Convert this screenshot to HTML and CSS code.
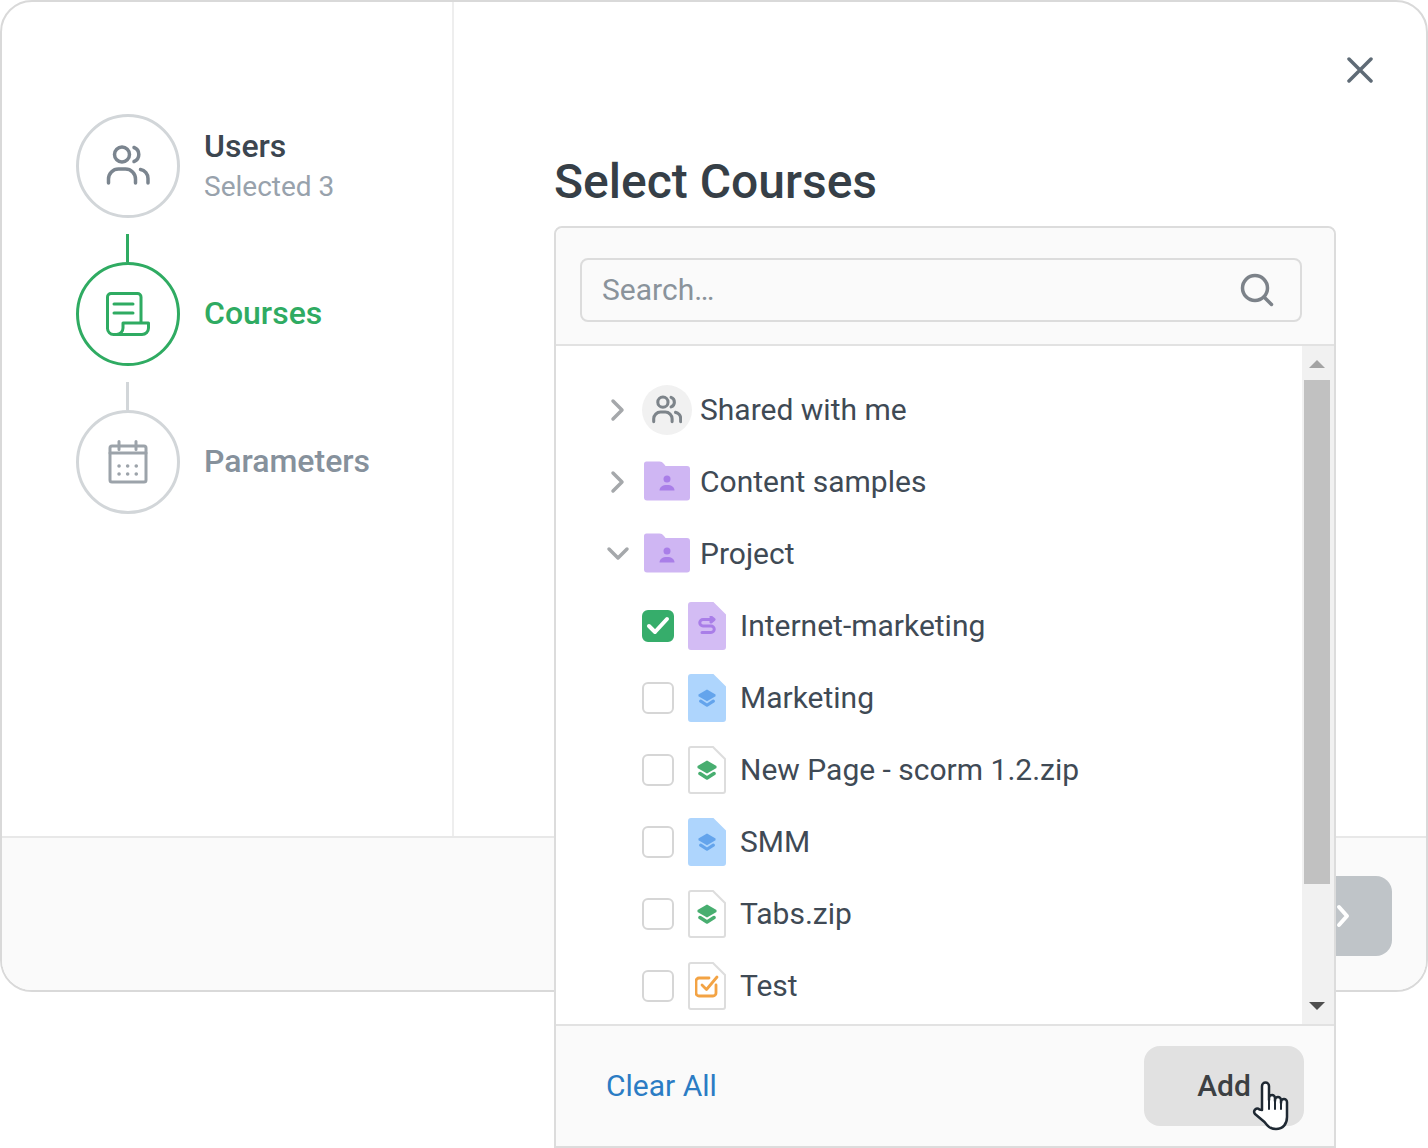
FILE: index.html
```html
<!DOCTYPE html>
<html lang="en">
<head>
    <meta charset="UTF-8">
    <title>Select Courses</title>
    <link rel="stylesheet" href="styles.css">
</head>
<body>
    <svg class="defs" width="0" height="0">
        <symbol id="users" viewBox="0 0 44 44">
            <circle cx="16" cy="10.500" r="7.500"/>
            <path d="M28 3.500a7.500 7.500 0 0 1 0 14"/>
            <path d="M2.500 39v-4a10 10 0 0 1 10-10h7a10 10 0 0 1 10 10v4"/>
            <path d="M34.500 25.500a9 9 0 0 1 7.500 9v4.500"/>
        </symbol>
        <symbol id="folder" viewBox="0 0 48 40">
            <path class="folder-back" d="M1 3a2.500 2.500 0 0 1 2.500-2.500h13c2 0 3 .8 4.500 2.500l1.500 2h21.500a3 3 0 0 1 3 3v28.500a3 3 0 0 1-3 3H4a3 3 0 0 1-3-3z"/>
            <circle class="folder-person" cx="24" cy="18" r="3.500"/>
            <path class="folder-person" d="M16.500 29.500c0-3.500 3-5.500 7.500-5.500s7.500 2 7.500 5.500z"/>
        </symbol>
        <symbol id="page" viewBox="0 0 38 48">
            <path d="M3 1h22l12 12v32a2 2 0 0 1-2 2H3a2 2 0 0 1-2-2V3a2 2 0 0 1 2-2z"/>
        </symbol>
        <symbol id="layers" viewBox="0 0 20 20">
            <path fill="currentColor" d="M10 .5l9.500 5.500v2L10 13.500.5 8V6z"/>
            <path fill="none" stroke="currentColor" stroke-width="3.500" stroke-linecap="round" stroke-linejoin="round" d="M3 13.500l7 4.500 7-4.500"/>
        </symbol>
    </svg>

    <div class="modal">
        <div class="modal-main">
            <aside class="steps">
                <div class="step">
                    <div class="step-circle">
                        <svg class="icon-users" width="44" height="44"><use href="#users"/></svg>
                    </div>
                    <div class="step-text">
                        <div class="step-name">Users</div>
                        <div class="step-sub">Selected 3</div>
                    </div>
                </div>
                <div class="step-line active"></div>
                <div class="step active">
                    <div class="step-circle">
                        <svg width="44" height="44" viewBox="0 0 44 44" fill="none" stroke="#2fab62" stroke-width="3" stroke-linejoin="round" stroke-linecap="round">
                            <path d="M35 31V5a3.500 3.500 0 0 0-3.500-3.500H5A3.500 3.500 0 0 0 1.500 5v31.500a6 6 0 0 0 6 6H36a6.500 6.500 0 0 0 6.500-6.500v-5H17v5a6.500 6.500 0 0 1-6.500 6.500"/>
                            <path d="M8 12h19M8 21h19"/>
                        </svg>
                    </div>
                    <div class="step-text">
                        <div class="step-name">Courses</div>
                    </div>
                </div>
                <div class="step-line"></div>
                <div class="step muted">
                    <div class="step-circle">
                        <svg width="44" height="44" viewBox="0 0 44 44" fill="none" stroke="#9ca3aa" stroke-width="3" stroke-linecap="round">
                            <rect x="4" y="6" width="36" height="36" rx="2"/>
                            <path d="M13 1.500v8M30 1.500v8M4 13h36"/>
                            <path stroke-width="3.500" stroke-dasharray="0.100 8.500" d="M13 26h18M13 34h18"/>
                        </svg>
                    </div>
                    <div class="step-text">
                        <div class="step-name">Parameters</div>
                    </div>
                </div>
            </aside>
            <section class="content">
                <button class="close" aria-label="Close">
                    <svg width="26" height="26" viewBox="0 0 26 26" stroke="#5f6b76" stroke-width="3.500" stroke-linecap="round"><path d="M2 2l22 22M24 2L2 24"/></svg>
                </button>
                <h1>Select Courses</h1>
            </section>
        </div>
        <div class="modal-footer">
            <button class="next">
                <svg width="14" height="24" viewBox="0 0 14 24" fill="none" stroke="#fff" stroke-width="4" stroke-linecap="round" stroke-linejoin="round"><path d="M3 3l8 9-8 9"/></svg>
            </button>
        </div>
    </div>

    <div class="picker">
        <div class="picker-head">
            <div class="search">
                <span class="search-text">Search…</span>
                <svg width="34" height="34" viewBox="0 0 34 34" fill="none" stroke="#7c8289" stroke-width="3.500" stroke-linecap="round"><circle cx="15" cy="15" r="12.500"/><path d="M24.500 24.500l7 7"/></svg>
            </div>
        </div>
        <div class="picker-body">
            <ul class="tree">
                <li class="row">
                    <svg class="chev" width="18" height="24" viewBox="0 0 18 24"><path d="M4 3l9 9-9 9"/></svg>
                    <span class="shared"><svg class="icon-users small" width="30" height="30"><use href="#users"/></svg></span>
                    <span class="label">Shared with me</span>
                </li>
                <li class="row">
                    <svg class="chev" width="18" height="24" viewBox="0 0 18 24"><path d="M4 3l9 9-9 9"/></svg>
                    <svg class="folder" width="48" height="40"><use href="#folder"/></svg>
                    <span class="label">Content samples</span>
                </li>
                <li class="row">
                    <svg class="chev" width="18" height="24" viewBox="0 0 18 24"><path d="M0 7l9 9 9-9"/></svg>
                    <svg class="folder" width="48" height="40"><use href="#folder"/></svg>
                    <span class="label">Project</span>
                </li>
                <li class="row child">
                    <span class="check checked">
                        <svg width="24" height="20" viewBox="0 0 24 20" fill="none" stroke="#fff" stroke-width="4" stroke-linecap="round" stroke-linejoin="round"><path d="M3 10l6 6L21 3"/></svg>
                    </span>
                    <span class="file">
                        <svg class="page purple" width="38" height="48"><use href="#page"/></svg>
                        <svg class="glyph" width="20" height="20" viewBox="0 0 20 20" fill="none" stroke="#a97ee8" stroke-width="3" stroke-linecap="round" stroke-linejoin="round">
                            <path d="M15 3.500H6a3 3 0 0 0 0 6.500h8a3 3 0 0 1 0 6.500H5"/>
                            <path d="M14 1l3 2.500-3 2.500"/>
                        </svg>
                    </span>
                    <span class="label">Internet-marketing</span>
                </li>
                <li class="row child">
                    <span class="check"></span>
                    <span class="file">
                        <svg class="page blue" width="38" height="48"><use href="#page"/></svg>
                        <svg class="glyph layers-blue" width="18" height="18"><use href="#layers"/></svg>
                    </span>
                    <span class="label">Marketing</span>
                </li>
                <li class="row child">
                    <span class="check"></span>
                    <span class="file">
                        <svg class="page plain" width="38" height="48"><use href="#page"/></svg>
                        <svg class="glyph layers-green" width="20" height="20"><use href="#layers"/></svg>
                    </span>
                    <span class="label">New Page - scorm 1.2.zip</span>
                </li>
                <li class="row child">
                    <span class="check"></span>
                    <span class="file">
                        <svg class="page blue" width="38" height="48"><use href="#page"/></svg>
                        <svg class="glyph layers-blue" width="18" height="18"><use href="#layers"/></svg>
                    </span>
                    <span class="label">SMM</span>
                </li>
                <li class="row child">
                    <span class="check"></span>
                    <span class="file">
                        <svg class="page plain" width="38" height="48"><use href="#page"/></svg>
                        <svg class="glyph layers-green" width="20" height="20"><use href="#layers"/></svg>
                    </span>
                    <span class="label">Tabs.zip</span>
                </li>
                <li class="row child">
                    <span class="check"></span>
                    <span class="file">
                        <svg class="page plain" width="38" height="48"><use href="#page"/></svg>
                        <svg class="glyph" width="24" height="24" viewBox="0 0 24 24" fill="none" stroke="#f3a344" stroke-width="2.800" stroke-linecap="round" stroke-linejoin="round">
                            <path d="M21 11v8a3 3 0 0 1-3 3H4a3 3 0 0 1-3-3V7a3 3 0 0 1 3-3h10"/>
                            <path d="M7 11l4.500 4.500L22 3"/>
                        </svg>
                    </span>
                    <span class="label">Test</span>
                </li>
            </ul>
            <div class="scrollbar">
                <span class="arrow up"></span>
                <div class="thumb-track"><div class="thumb"></div></div>
                <span class="arrow down"></span>
            </div>
        </div>
        <div class="picker-foot">
            <a class="clear" href="#">Clear All</a>
            <button class="add">Add</button>
        </div>
    </div>

    <svg class="cursor" width="38" height="50" viewBox="0 0 38 50" fill="#fff" stroke="#1f2933" stroke-width="2.500" stroke-linejoin="round" stroke-linecap="round">
        <path d="M10 29V5a3.500 3.500 0 0 1 7 0v14-2a3 3 0 0 1 6 0v3-1a3 3 0 0 1 6 0v3-1a3 3 0 0 1 6 0v15c0 7-4 12-11 12-6 0-8.500-3-11.500-7L3 33c-2.500-3.500 1.500-7 4.500-4.500z"/>
        <path d="M17 19v9M23 20v8M29 22v6" fill="none" stroke-width="2"/>
    </svg>
</body>
</html>
```

FILE: styles.css
```css
* {
    box-sizing: border-box;
}
html, body {
    margin: 0;
    padding: 0;
    height: 1148px;
    overflow: hidden;
    background-color: #fff;
}
body {
    position: relative;
    font-family: Roboto, "Liberation Sans", sans-serif;
    color: #3c4650;
}
button {
    font-family: inherit;
    border: none;
    cursor: pointer;
}
.defs {
    position: absolute;
}

/* modal behind the picker */
.modal {
    width: 1428px;
    height: 992px;
    border: 2px solid #d9d9d9;
    border-radius: 32px;
    overflow: hidden;
    display: flex;
    flex-direction: column;
}
.modal-main {
    height: 834px;
    display: flex;
}
.modal-footer {
    flex: 1;
    background-color: #fafafa;
    border-top: 2px solid #e8e8e8;
    display: flex;
    justify-content: flex-end;
    align-items: flex-start;
    padding: 38px 34px 0 0;
}
.next {
    width: 120px;
    height: 80px;
    background-color: #bfc4c8;
    border-radius: 16px;
    display: flex;
    align-items: center;
    padding-left: 64px;
}

/* steps */
.steps {
    width: 452px;
    border-right: 2px solid #eeeeee;
    padding: 112px 0 0 74px;
}
.step {
    display: flex;
    align-items: center;
    height: 104px;
}
.step-circle {
    width: 104px;
    height: 104px;
    border: 3px solid #d2d6d9;
    border-radius: 50%;
    display: flex;
    align-items: center;
    justify-content: center;
}
.step.active .step-circle {
    border-color: #2fab62;
}
.step-text {
    margin-left: 24px;
    padding-top: 1px;
}
.step.active .step-text,
.step.muted .step-text {
    padding-bottom: 4px;
}
.step-name {
    font-size: 32px;
    line-height: 40px;
    font-weight: 500;
}
.step-sub {
    font-size: 28px;
    line-height: 40px;
    margin-top: 1px;
    color: #98a2ac;
}
.step.active .step-name {
    color: #2fab62;
}
.step.muted .step-name {
    color: #86919c;
}
.step-line {
    width: 3px;
    height: 28px;
    margin: 16px 0 0 50px;
    background-color: #d2d6d9;
}
.step-line.active {
    background-color: #2fab62;
}
.icon-users {
    fill: none;
    stroke: #7b858f;
    stroke-width: 3.500;
    stroke-linecap: round;
}
.icon-users.small {
    stroke: #7d848a;
    stroke-width: 4.500;
}

/* right side */
.content {
    flex: 1;
    padding: 55px 0 0 100px;
    display: flex;
    flex-direction: column;
}
.close {
    align-self: flex-end;
    width: 26px;
    height: 26px;
    padding: 0;
    margin-right: 53px;
    background: none;
    display: flex;
}
h1 {
    margin: 72px 0 0;
    font-size: 48px;
    line-height: 54px;
    font-weight: 500;
    color: #363f47;
}

/* course picker */
.picker {
    position: absolute;
    left: 554px;
    top: 226px;
    width: 782px;
    height: 922px;
    border: 2px solid #dcdcdc;
    border-radius: 8px 8px 0 0;
    background-color: #fff;
    display: flex;
    flex-direction: column;
}
.picker-head {
    height: 118px;
    padding: 30px 32px 0 24px;
    background-color: #fafafa;
    border-bottom: 2px solid #e2e2e2;
    border-radius: 8px 8px 0 0;
}
.search {
    height: 64px;
    border: 2px solid #dcdcdc;
    border-radius: 8px;
    padding: 0 26px 0 20px;
    display: flex;
    align-items: center;
    justify-content: space-between;
}
.search-text {
    font-size: 30px;
    padding-bottom: 2px;
    color: #8a939b;
}
.picker-body {
    height: 678px;
    display: flex;
    overflow: hidden;
}
.tree {
    flex: 1;
    list-style: none;
    margin: 0;
    padding: 28px 0 0 50px;
}
.row {
    height: 72px;
    display: flex;
    align-items: center;
    font-size: 30px;
    color: #3f4a55;
}
.row.child {
    padding-left: 36px;
}
.label {
    padding-bottom: 2px;
}
.chev {
    flex: none;
    fill: none;
    stroke: #a5a8ab;
    stroke-width: 3.500;
    stroke-linecap: round;
    stroke-linejoin: round;
    margin: 0 15px 0 3px;
    overflow: visible;
}
.shared {
    width: 50px;
    height: 50px;
    margin-right: 8px;
    border-radius: 50%;
    background-color: #f1f1f1;
    display: flex;
    align-items: center;
    justify-content: center;
}
.folder {
    margin: -2px 9px 0 1px;
}
.folder-back {
    fill: #cfb6f3;
}
.folder-person {
    fill: #a97ee8;
}
.check {
    width: 32px;
    height: 32px;
    border: 2px solid #d6d6d6;
    border-radius: 6px;
    margin-right: 14px;
    display: flex;
    align-items: center;
    justify-content: center;
    flex: none;
}
.check.checked {
    background-color: #36ad6b;
    border-color: #36ad6b;
}
.file {
    position: relative;
    width: 38px;
    height: 48px;
    margin-right: 14px;
    display: flex;
    align-items: center;
    justify-content: center;
}
.page {
    position: absolute;
    left: 0;
    top: 0;
}
.page.purple {
    fill: #d3bcf4;
    stroke: #d3bcf4;
    stroke-width: 2;
}
.page.blue {
    fill: #aed5fd;
    stroke: #aed5fd;
    stroke-width: 2;
}
.page.plain {
    fill: #fff;
    stroke: #dddddd;
    stroke-width: 2;
}
.glyph {
    position: relative;
}
.layers-blue {
    color: #64a4ec;
}
.layers-green {
    color: #48ae70;
}

/* scrollbar */
.scrollbar {
    width: 32px;
    background-color: #f1f1f1;
    display: flex;
    flex-direction: column;
    align-items: center;
}
.arrow {
    width: 0;
    height: 0;
    margin-left: -2px;
    border-left: 8px solid transparent;
    border-right: 8px solid transparent;
}
.arrow.up {
    margin-top: 14px;
    border-bottom: 8px solid #a3a3a3;
}
.arrow.down {
    border-top: 8px solid #4f4f4f;
}
.thumb-track {
    flex: none;
    width: 100%;
    height: 634px;
    padding: 12px 4px 0 2px;
}
.thumb {
    height: 504px;
    background-color: #c1c1c1;
}
.picker-foot {
    flex: 1;
    border-top: 2px solid #e2e2e2;
    background-color: #fafafa;
    display: flex;
    align-items: center;
    justify-content: space-between;
    padding: 0 30px 0 50px;
}
.clear {
    font-size: 30px;
    padding-bottom: 2px;
    color: #2b7cc4;
    text-decoration: none;
}
.add {
    width: 160px;
    height: 80px;
    padding: 0 0 2px;
    border-radius: 16px;
    background-color: #e1e1e1;
    color: #3c4043;
    font-size: 30px;
    font-weight: 500;
}

/* pointer over the button */
.cursor {
    position: absolute;
    left: 1252px;
    top: 1081px;
}
```
